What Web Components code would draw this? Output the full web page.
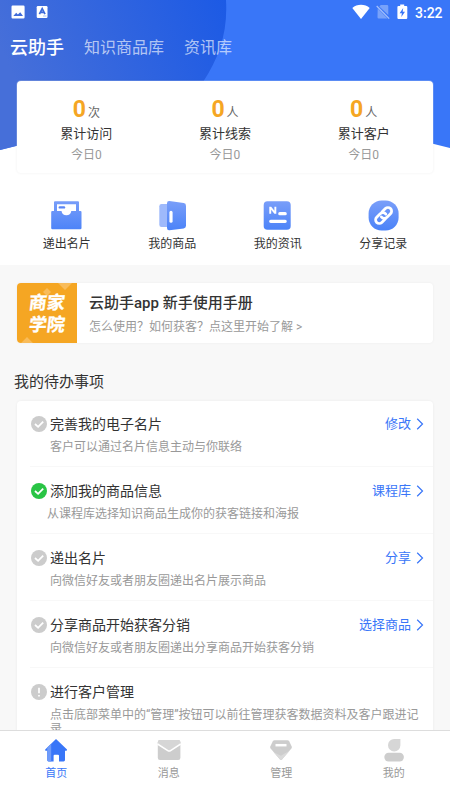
<!DOCTYPE html>
<html lang="zh-CN">
<head>
<meta charset="utf-8">
<title>云助手</title>
<style>
html,body{margin:0;height:100%;overflow:hidden;background:#fff}
body{font-family:Roboto,"Noto Sans CJK SC",sans-serif;color:#333}
</style>
</head>
<body>
<app-shell>
  <status-bar slot="head"></status-bar>
  <top-tabs slot="head"></top-tabs>
  <stats-card slot="head">
    <stat-item unit="次" label="累计访问" sub="今日0">0</stat-item>
    <stat-item unit="人" label="累计线索" sub="今日0">0</stat-item>
    <stat-item unit="人" label="累计客户" sub="今日0">0</stat-item>
  </stats-card>
  <quick-grid slot="head">
    <quick-item icon="card">递出名片</quick-item>
    <quick-item icon="goods">我的商品</quick-item>
    <quick-item icon="news">我的资讯</quick-item>
    <quick-item icon="link">分享记录</quick-item>
  </quick-grid>
  <guide-banner>
    <span slot="title">云助手app 新手使用手册</span>
    <span slot="sub">怎么使用？如何获客？点这里开始了解 &gt;</span>
  </guide-banner>
  <todo-list heading="我的待办事项">
    <todo-item name="完善我的电子名片" action="修改">客户可以通过名片信息主动与你联络</todo-item>
    <todo-item name="添加我的商品信息" action="课程库" state="done">从课程库选择知识商品生成你的获客链接和海报</todo-item>
    <todo-item name="递出名片" action="分享">向微信好友或者朋友圈递出名片展示商品</todo-item>
    <todo-item name="分享商品开始获客分销" action="选择商品">向微信好友或者朋友圈递出分享商品开始获客分销</todo-item>
    <todo-item name="进行客户管理" state="info">点击底部菜单中的“管理”按钮可以前往管理获客数据资料及客户跟进记录</todo-item>
  </todo-list>
  <nav-bar slot="nav">
    <nav-item icon="home" active>首页</nav-item>
    <nav-item icon="mail">消息</nav-item>
    <nav-item icon="gem">管理</nav-item>
    <nav-item icon="user">我的</nav-item>
  </nav-bar>
</app-shell>
<script>
const define = (name, render) => customElements.define(name, class extends HTMLElement {
  constructor() {
    super();
    this.attachShadow({mode: 'open'}).innerHTML = render(this);
  }
});

define('app-shell', () => `
<style>
:host{display:flex;flex-direction:column;width:450px;height:800px;background:#f8f8f8}
header{position:relative;flex:none;height:265px;background:#fff;display:flex;flex-direction:column}
.bg{position:absolute;left:0;top:0}
main{flex:1;min-height:0;overflow:hidden;display:flex;flex-direction:column}
::slotted([slot=head]){position:relative}
</style>
<header>
<svg class="bg" width="450" height="155" viewBox="0 0 450 155">
<defs><linearGradient id="g" x1="0" y1="0.3" x2="1" y2="0"><stop offset="0" stop-color="#466fd9"/><stop offset="1" stop-color="#1c5ae5"/></linearGradient>
<clipPath id="c"><path d="M0 0H450V148Q225 90 0 150Z"/></clipPath></defs>
<g clip-path="url(#c)"><path d="M0 0H450V155H0Z" fill="#3976f8"/><path d="M0 0H226C228 32 219 58 203 82C188 108 160 135 130 155H0Z" fill="url(#g)"/></g>
</svg>
<slot name="head"></slot></header>
<main><slot></slot></main>
<slot name="nav"></slot>`);

define('status-bar', () => `
<style>
:host{display:flex;align-items:center;height:24px;padding:0 7px 0 11px;color:#fff;box-sizing:border-box;flex:none}
.time{font-size:14px;line-height:24px;font-weight:500;margin-left:7px;position:relative;top:1px;width:28px}
.gap{flex:1}
svg{display:block}
</style>
<svg width="14" height="24" viewBox="0 0 14 24"><path fill="#fff" fill-rule="evenodd" d="M1.6 5.5H12.4Q13.6 5.5 13.6 6.7V17.3Q13.6 18.5 12.4 18.5H1.6Q.5 18.5 .5 17.3V6.7Q.5 5.5 1.6 5.5ZM2.3 16H12L9.2 12.2L6.9 14.6L5.2 12.8Z"/></svg>
<svg style="margin-left:11px" width="12" height="24" viewBox="0 0 12 24"><rect x=".7" y="6" width="10.8" height="12" rx="1.2" fill="#fff"/><path d="M3.4 14.2L6.2 8.6L9 14.2M4.6 12.3H7.8" fill="none" stroke="#3d6ada" stroke-width="1.7"/><path d="M7 16H10.5" stroke="#9bb4ee" stroke-width=".8"/></svg>
<div class="gap"></div>
<svg width="18" height="24" viewBox="0 0 18 24"><path fill="#fff" d="M.3 8C5 3.8 13 3.8 17.7 8L9 19Z"/></svg>
<svg style="margin-left:6px" width="14" height="24" viewBox="0 0 14 24"><path fill="#fff" opacity=".32" d="M4.8 5H11Q12.3 5 12.3 6.2V15L3.3 6.5ZM1.7 8.5L11.5 18.5H2.7Q1.5 18.5 1.5 17.3Z"/><path d="M.7 6L13.2 18.7" stroke="#fff" opacity=".55" stroke-width="1.2"/></svg>
<svg style="margin-left:7px" width="11" height="24" viewBox="0 0 11 24"><path fill="#fff" d="M3.2 4.5H7.2V6H9.2Q10.3 6 10.3 7.1V17.8Q10.3 19 9.2 19H1.5Q.4 19 .4 17.8V7.1Q.4 6 1.5 6H3.2Z"/><path fill="#3976f8" d="M6.2 8L2.6 13.2H4.9L4.3 17L8 11.7H5.7Z"/></svg>
<div class="time">3:22</div>`);

define('top-tabs', () => `
<style>
:host{display:flex;align-items:center;height:46px;padding:1px 0 0 10px;gap:20px;color:rgba(255,255,255,.65);font-size:16px;line-height:24px;flex:none}
b{font-size:18px;font-weight:500;color:#fff}
</style>
<b>云助手</b><span>知识商品库</span><span>资讯库</span>`);

define('stats-card', () => `
<style>
:host{display:grid;grid-template-columns:repeat(3,1fr);height:92px;margin:10px 17px 0;background:#fff;border-radius:4px;box-shadow:0 0 0 1px rgba(255,255,255,.18),0 0 3px rgba(0,0,0,.07);flex:none}
</style><slot></slot>`);

define('stat-item', el => `
<style>
:host{display:flex;flex-direction:column;align-items:center}
.n{display:flex;align-items:baseline;gap:2px;font-size:12px;line-height:26px;height:26px;margin-top:16px;color:#666}
b{font-size:23px;color:#f5a623;font-weight:700}
.l{font-size:13px;line-height:18px;margin-top:2px;color:#333}
.s{font-size:12px;line-height:18px;margin-top:3px;color:#999}
</style>
<div class="n"><b><slot></slot></b><span>${el.getAttribute('unit')}</span></div>
<div class="l">${el.getAttribute('label')}</div><div class="s">${el.getAttribute('sub')}</div>`);

define('quick-grid', () => `
<style>:host{display:grid;grid-template-columns:repeat(4,1fr);margin:26px 14px 0;flex:none}</style><slot></slot>`);

const quickIcons = {
  card: `<path fill="url(#q)" fill-rule="evenodd" d="M5 1.3H28Q29 1.3 29 2.3V11H30.5Q31.5 11 31.5 12V28Q31.5 29.3 30.2 29.3H2.5Q1.2 29.3 1.2 28V12Q1.2 11 2.2 11H4V2.3Q4 1.3 5 1.3ZM7 4.3V11H11.5Q12.3 15.3 16.4 15.3Q20.5 15.3 21.3 11H26V4.3Z"/><path d="M9.8 7.4H14" stroke="#5b86f5" stroke-width="2.4" stroke-linecap="round"/>`,
  goods: `<path fill="#9eb9fb" d="M5.5 4H13V27H5.5Q3.3 27 3.3 24.8V6.2Q3.3 4 5.5 4Z"/><path fill="url(#q)" d="M13.4 1L27.7 3Q30 3.4 30 5.7V25.7Q30 28 27.7 28.4L13.4 30.3Q11 30.5 11 28V3.2Q11 .8 13.4 1Z"/><path d="M15 12.4V21.2" stroke="#fff" stroke-width="3.2" stroke-linecap="round"/>`,
  news: `<rect x="2.7" y="1.3" width="27" height="28.4" rx="3.8" fill="url(#q)"/><path d="M8.3 6.8H10.2L13.4 10.8V6.8H15.3V13.8H13.4L10.2 9.8V13.8H8.3Z" fill="#fff"/><path d="M18.8 13.7H24.2M9.7 21.3H24.2" stroke="#fff" stroke-width="3.2" stroke-linecap="round"/>`,
  link: `<rect x="1.6" y=".4" width="30" height="30.2" rx="13" fill="url(#q)"/><g transform="translate(16.6 15.5) rotate(-45) scale(1.14)" fill="none" stroke="#fff" stroke-width="2.4" stroke-linecap="round"><path d="M-1.2 3.2H-5.4A3.2 3.2 0 0 1 -5.4 -3.2H-1A3.3 3.3 0 0 1 2.3 .5"/><path d="M1.2 -3.2H5.4A3.2 3.2 0 0 1 5.4 3.2H1A3.3 3.3 0 0 1 -2.3 -.5"/></g>`
};
define('quick-item', el => `
<style>
:host{display:flex;flex-direction:column;align-items:center;font-size:12px;line-height:18px;color:#333}
svg{display:block;margin:1px 0 4px}
</style>
<svg width="33" height="31" viewBox="0 0 33 31"><defs><linearGradient id="q" gradientUnits="userSpaceOnUse" x1="0" y1="0" x2="0" y2="31"><stop offset="0" stop-color="#7b9ff9"/><stop offset="1" stop-color="#4a82f8"/></linearGradient></defs>${quickIcons[el.getAttribute('icon')]}</svg>
<slot></slot>`);

define('guide-banner', () => `
<style>
:host{display:flex;height:60px;margin:18px 17px 0;background:#fff;border-radius:4px;box-shadow:0 0 3px rgba(0,0,0,.05);flex:none}
.logo{position:relative;box-sizing:border-box;width:60px;padding-top:2px;border-radius:4px 0 0 4px;overflow:hidden;background:#f5a623;color:#fff;display:flex;flex-direction:column;align-items:center;justify-content:center;font-size:18px;line-height:22px;font-weight:700}
.logo svg{position:absolute;left:0;top:0}
.logo span{position:relative;transform:skewX(-7deg);-webkit-text-stroke:.3px #fff}
.t{display:flex;flex-direction:column;margin-left:12px}
.a{font-size:15px;line-height:22px;font-weight:500;color:#333;margin-top:9px}
.b{font-size:12px;line-height:18px;color:#999;margin-top:4px}
</style>
<div class="logo"><svg width="60" height="60"><path fill="#f9bc5a" d="M41 0H55L48 7ZM26 9L30 5L34 9L30 13ZM4 60L10 54L16 60Z"/></svg><span>商家</span><span>学院</span></div>
<div class="t"><div class="a"><slot name="title"></slot></div><div class="b"><slot name="sub"></slot></div></div>`);

define('todo-list', el => `
<style>
:host{display:flex;flex-direction:column}
h2{margin:28px 0 8px 14px;font-size:15px;line-height:22px;font-weight:400;color:#333}
.c{margin:0 17px;background:#fff;border-radius:4px;box-shadow:0 0 3px rgba(0,0,0,.06)}
</style><h2>${el.getAttribute('heading')}</h2><div class="c"><slot></slot></div>`);

define('todo-item', el => {
  const state = el.getAttribute('state'), action = el.getAttribute('action');
  const color = state === 'done' ? '#29c445' : '#ccc';
  const mark = state === 'info'
    ? '<path d="M8 3.8V9.2M8 11V12.4" stroke="#fff" stroke-width="1.7"/>'
    : '<path d="M4 8L7.1 10.8L12.2 5.6" fill="none" stroke="#fff" stroke-width="1.8"/>';
  return `
<style>
:host{display:block;box-sizing:border-box;height:67px;padding-top:14px;margin-left:13px;border-bottom:1px solid #f8f8f8}
:host(:first-child){height:66px;padding-top:13px}
:host(:last-child){border:0}
.r{display:flex;align-items:center;height:20px;font-size:14px;line-height:20px;color:#333}
.i{margin:0 3px 0 1px;display:block}
.act{margin-left:auto;display:flex;align-items:center;gap:5px;padding-right:9px;font-size:13px;color:#3976f8}
.d{font-size:12px;line-height:14px;color:#999;margin:6px 10px 0 20px}
:host([state=done]) .d{margin-left:17px}
</style>
<div class="r"><svg class="i" width="16" height="16" viewBox="0 0 16 16"><circle cx="8" cy="8" r="8" fill="${color}"/>${mark}</svg><span>${el.getAttribute('name')}</span>
${action ? `<span class="act">${action}<svg width="8" height="12" viewBox="0 0 8 12"><path d="M1.2 .8L6.5 6L1.2 11.2" fill="none" stroke="#3976f8" stroke-width="1.2"/></svg></span>` : ''}</div>
<div class="d"><slot></slot></div>`;
});

define('nav-bar', () => `
<style>:host{display:grid;grid-template-columns:repeat(4,1fr);height:69px;background:#fff;border-top:1px solid #ddd;flex:none}</style><slot></slot>`);

const navIcons = {
  home: `<path fill="#3976f8" d="M12 1L23 11.4Q23.4 12.6 22 12.8H21V22Q21 23.4 19.6 23.4H15V17.8Q15 16.8 14 16.8H10.6Q9.6 16.8 9.6 17.8V23.4H4.6Q3.2 23.4 3.2 22V12.8H2Q.6 12.6 1.2 11.4Z"/><path fill="#6f9bfa" d="M3.2 9.5L7.2 5.7V23.4H4.6Q3.2 23.4 3.2 22V12.8Z"/>`,
  mail: `<rect x=".8" y="2" width="22.6" height="20" rx="2.2" fill="#cdcdcd"/><path fill="#d6d6d6" d="M3 2H21.2Q23.4 2 23.4 4V6L12.2 13.5L.8 6V4Q.8 2 3 2Z"/><path d="M.5 6L10.8 12.6Q12.2 13.5 13.6 12.6L23.7 6" fill="none" stroke="#fff" stroke-width="1.5"/>`,
  gem: `<path fill="#cdcdcd" d="M5.5 2.2H18.5Q19.5 2.2 20.1 3L22.7 8.5Q23.2 9.6 22.4 10.6L13 21.4Q12 22.4 11 21.4L1.6 10.6Q.8 9.6 1.3 8.5L3.9 3Q4.5 2.2 5.5 2.2Z"/><path fill="#dadada" d="M3.2 12.4L5 14.5L12 17.8L20.8 12.4L13 21.4Q12 22.4 11 21.4Z"/><path d="M6.5 7.2H17.5" stroke="#fff" stroke-width="2.5"/>`,
  user: `<path fill="#d6d6d6" d="M12.2 1H18.4V7.3A6.2 6.2 0 1 1 12.2 1Z"/><rect x="2.3" y="14.7" width="19.6" height="8.7" rx="4.3" fill="#cdcdcd"/>`
};
define('nav-item', el => `
<style>
:host{display:flex;flex-direction:column;align-items:center;font-size:11px;line-height:16px;color:#999}
:host([active]){color:#3976f8}
svg{display:block;margin:7px 0 4px}
</style>
<svg width="24" height="24" viewBox="0 0 24 24">${navIcons[el.getAttribute('icon')]}</svg><slot></slot>`);
</script>
</body>
</html>
